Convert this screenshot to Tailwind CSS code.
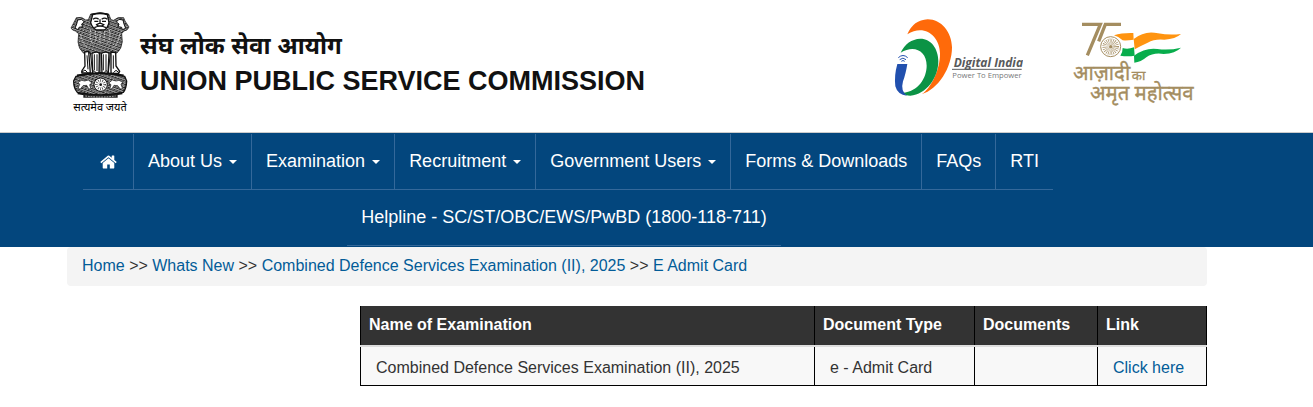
<!DOCTYPE html>
<html lang="en">
<head>
    <meta charset="UTF-8">
    <meta name="viewport" content="width=device-width, initial-scale=1.0">
    <title>Union Public Service Commission</title>
    <script src="https://cdn.jsdelivr.net/npm/@tailwindcss/browser@4"></script>
</head>
<body class="bg-white font-['Liberation_Sans',Arial,sans-serif] text-base text-[#333]">
    <header class="flex items-start justify-between border-b border-[#ccc] pl-[70px] pr-[117px] pt-[10px] pb-[17px]">
        <div class="flex items-start gap-[10px]">
            <!-- State emblem -->
            <svg class="w-[60px] h-[105px] shrink-0" viewBox="30 30 180 315" role="img" aria-label="National emblem">
                <defs>
                    <pattern id="mane" width="9" height="9" patternUnits="userSpaceOnUse" patternTransform="rotate(20)">
                        <rect width="9" height="9" fill="#222"/>
                        <path d="M1 6q3-6 6-2M5 9q2-3 4-2" stroke="#fff" stroke-width="2.8" fill="none"/>
                    </pattern>
                </defs>
                <path d="M92 42q30-8 54 0l7 17 8 2q13-13 30-8l4 10 12 18q-5 12-15 12l-7 8 2 24q-2 22-16 34l-100 1q-16-14-17-34l2-25-10-8q-9-1-13-9l11-21 5-10q17-5 28 7l8-1z" fill="url(#mane)" stroke="#111" stroke-width="2"/>
                <path d="M98 44q22-7 44 0l5 24q-5 18-14 22h-24q-12-6-17-22z" fill="#fff" stroke="#111" stroke-width="4"/>
                <path d="M94 44q28-9 52 0M99 58q9-7 17 0M125 58q9-7 17 0M120 58v14M110 74l10-5 11 5-5 4h-12zM103 83q17-9 35 0M103 64h12M126 64h12" fill="none" stroke="#111" stroke-width="4"/>
                <path d="M53 60l12-2 8 8-8 6 3 8-11 2-2 7-10-4 5-13zM189 60l-12-2-8 8 8 6-3 8 11 2 2 7 10-4-5-13z" fill="#fff" stroke="#111" stroke-width="3"/>
                <path d="M92 90q-5 28 7 42M148 90q6 28-6 42M106 93l2 30M120 93v37M134 93l-2 30M62 103q4 28 23 43M179 103q-4 28-22 43" fill="none" stroke="#fff" stroke-width="2" stroke-dasharray="5 3"/>
                <path d="M74 156l12-2 5 65H66q-3-5 4-13l5-8zM96 160q16-7 22 0l-1 61H98zM124 160q15-7 23 0l-3 61h-18zM153 156l14 2 1 40 11 16-3 6h-23z" fill="#fff" stroke="#111" stroke-width="4"/>
                <path d="M91 158l7 60M103 163v48M111 163v50M130 163v48M138 163v50M151 158l-6 60M81 166l3 42M160 166v40M120 156v66" fill="none" stroke="#111" stroke-width="3"/>
                <path d="M66 216l9-6 8 8M94 219l8-7 8 8M130 220l8-8 8 7M160 218l8-7 9 7" fill="none" stroke="#111" stroke-width="3"/>
                <path d="M48 229q72-17 146 0l6 14q-1 23-10 34-69 15-138 0-11-12-11-34z" fill="url(#mane)" stroke="#111" stroke-width="4"/>
                <path d="M51 226q70-15 140 0M53 280q70 14 134 0" fill="none" stroke="#111" stroke-width="5"/>
                <path d="M54 247q12-10 20-4l11-3 11 9-7 5 4 14-7-2-6-10-11 1-8 10-7-1 5-13zM188 247q-12-10-20-4l-11-3-11 9 7 5-4 14 7-2 6-10 11 1 8 10 7-1-5-13z" fill="#fff" stroke="#111" stroke-width="2"/>
                <circle cx="122" cy="254" r="20" fill="#fff" stroke="#111" stroke-width="3"/>
                <circle cx="122" cy="254" r="12" fill="none" stroke="#333" stroke-width="9" stroke-dasharray="2 4"/>
                <circle cx="122" cy="254" r="4" fill="#111"/>
                <path d="M70 282q50 8 103 0v11H70z" fill="#222"/>
                <path d="M76 288q45 6 91 0" fill="none" stroke="#fff" stroke-width="2" stroke-dasharray="5 3"/>
                <text x="120" y="334" text-anchor="middle" font-family="Noto Sans Devanagari, Noto Sans, sans-serif" font-size="33" fill="#000">सत्यमेव जयते</text>
            </svg>
            <div class="pt-5 font-bold text-[#111]">
                <p lang="hi" class="text-2xl leading-8 font-['Liberation_Sans','Noto_Sans_Devanagari','Noto_Sans',sans-serif]">संघ लोक सेवा आयोग</p>
                <h1 class="text-[27px] leading-[38px]">UNION PUBLIC SERVICE COMMISSION</h1>
            </div>
        </div>
        <div class="flex items-start gap-[49px]">
            <!-- Digital India -->
            <svg class="mt-2 w-[130px] h-[80px] shrink-0" viewBox="40 25 390 240" role="img" aria-label="Digital India">
                <path d="M83 74Q101 31 144 29c41 0 72 38 73 84 0 62-42 126-91 141 31-22 55-76 55-122 0-54-48-91-98-58z" fill="#ff6a0a"/>
                <path d="M63 129Q82 89 122 87c32 0 54 30 54 67 0 51-36 100-84 104q-15 0-23-9c47-3 72-45 72-81 0-45-38-64-78-39z" fill="#0b9345"/>
                <path d="M53 163h30q-5 31-13 52-8 30 12 43-28-2-35-28-4-32 6-67z" fill="#2150ae"/>
                <path d="M56 144q14-13 28 0M60 150q10-9 19 0M65 155q5-5 10 0" fill="none" stroke="#2150ae" stroke-width="3"/>
                <text x="222" y="173" font-family="Open Sans, sans-serif" font-size="36" font-style="italic" font-weight="700" fill="#58595b">Digital India</text>
                <path d="M217 179h209" stroke="#58595b" stroke-width="3"/>
                <text x="218" y="205" font-family="Open Sans, sans-serif" font-size="23" fill="#77787a">Power To Empower</text>
            </svg>
            <!-- Azadi Ka Amrit Mahotsav -->
            <svg class="mt-[10px] w-[124px] h-[88px] shrink-0" viewBox="36 30 372 264" role="img" aria-label="Azadi Ka Amrit Mahotsav">
                <path d="M66 43h55L82 136M183 43h-47l-20 51" fill="none" stroke="#a48d60" stroke-width="10"/>
                <path d="M162 76q24-8 58-7l1 20q-20 3-33 2-9-10-26-15z" fill="#ff9410"/>
                <path d="M221 87q34-27 73-17 34 6 69 2-16 15-50 17-29-3-50 9-20 9-39 20z" fill="#ff9410"/>
                <path d="M188 114q15 5 34-2l2 25q-21 4-43 0 7-9 7-23z" fill="#08ad4c"/>
                <path d="M222 137q34-25 70-20 35 5 71-4-17 17-52 19-31-5-52 10-16 14-36 16z" fill="#08ad4c"/>
                <circle cx="152" cy="110" r="30" fill="#fff" stroke="#a48d60" stroke-width="3"/>
                <circle cx="152" cy="110" r="15" fill="none" stroke="#a48d60" stroke-width="20" stroke-dasharray="1.5 2.43"/>
                <circle cx="152" cy="110" r="5" fill="#a48d60"/>
                <g font-family="Noto Sans Devanagari, Noto Sans, sans-serif" fill="#a48d60" stroke="#a48d60" stroke-width="1">
                    <text x="39" y="211" font-size="61">आज़ादी</text>
                    <text x="215" y="211" font-size="40">का</text>
                    <text x="90" y="270" font-size="61">अमृत महोत्सव</text>
                </g>
            </svg>
        </div>
    </header>

    <nav class="bg-[#03467d] pl-[82px] pt-px pb-px text-lg text-white">
        <ul class="flex max-w-[972px] flex-wrap justify-center leading-[55px] *:border-b *:border-[#34689a]">
            <li class="border-r">
                <a href="#" aria-label="Home" class="flex h-[55px] w-[50px] items-center justify-center">
                    <svg class="h-[18px] w-[17px]" viewBox="0 0 1664 1792" fill="currentColor"><path d="M1408 992v480q0 26-19 45t-45 19H960v-384H704v384H320q-26 0-45-19t-19-45V992q0-1 .5-3t.5-3l575-474 575 474q1 2 1 6zm223-69l-62 74q-8 9-21 11h-3q-13 0-21-7L832 424l-692 577q-12 8-24 7-13-2-21-11l-62-74q-8-10-7-23.5T37 878l719-599q32-26 76-26t76 26l244 204V288q0-14 9-23t23-9h192q14 0 23 9t9 23v408l219 182q10 8 11 21.5t-7 23.5z"/></svg>
                </a>
            </li>
            <li class="border-r">
                <button type="button" class="flex items-center gap-[7px] px-[14px]">About Us <span class="border-x-4 border-t-4 border-x-transparent border-t-white"></span></button>
            </li>
            <li class="border-r">
                <button type="button" class="flex items-center gap-[7px] px-[14px]">Examination <span class="border-x-4 border-t-4 border-x-transparent border-t-white"></span></button>
            </li>
            <li class="border-r">
                <button type="button" class="flex items-center gap-[7px] px-[14px]">Recruitment <span class="border-x-4 border-t-4 border-x-transparent border-t-white"></span></button>
            </li>
            <li class="border-r">
                <button type="button" class="flex items-center gap-[7px] px-[14px]">Government Users <span class="border-x-4 border-t-4 border-x-transparent border-t-white"></span></button>
            </li>
            <li class="border-r"><a href="#" class="block px-[14px]">Forms &amp; Downloads</a></li>
            <li class="border-r"><a href="#" class="block px-[14px]">FAQs</a></li>
            <li><a href="#" class="block px-[14px]">RTI</a></li>
            <li class="mr-2"><a href="#" class="block px-[14px]">Helpline - SC/ST/OBC/EWS/PwBD (1800-118-711)</a></li>
        </ul>
    </nav>

    <main class="pl-[67px] pr-[106px]">
        <div class="rounded bg-[#f4f4f4] px-[15px] pt-[7px] pb-2 leading-6">
            <a href="#" class="text-[#035c98]">Home</a> &gt;&gt;
            <a href="#" class="text-[#035c98]">Whats New</a> &gt;&gt;
            <a href="#" class="text-[#035c98]">Combined Defence Services Examination (II), 2025</a> &gt;&gt;
            <a href="#" class="text-[#035c98]">E Admit Card</a>
        </div>
        <div class="mt-5 pl-[293px]">
            <table class="w-full table-fixed border-collapse text-left leading-6">
                <thead>
                    <tr class="border-b-2 border-[#ddd] bg-[#333] text-white *:border-x *:border-x-black *:px-2 *:pt-[7px] *:pb-2">
                        <th>Name of Examination</th>
                        <th class="w-[160px]">Document Type</th>
                        <th class="w-[123px]">Documents</th>
                        <th class="w-[109px]">Link</th>
                    </tr>
                </thead>
                <tbody>
                    <tr class="border-b border-black bg-[#f8f8f8] *:border-x *:border-black *:px-[15px] *:pt-[9px] *:pb-[5px]">
                        <td>Combined Defence Services Examination (II), 2025</td>
                        <td>e - Admit Card</td>
                        <td></td>
                        <td><a href="#" class="text-[#035c98]">Click here</a></td>
                    </tr>
                </tbody>
            </table>
        </div>
    </main>
</body>
</html>
